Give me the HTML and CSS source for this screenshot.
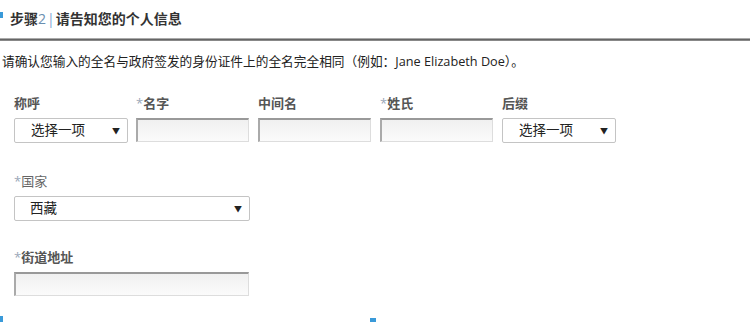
FILE: index.html
```html
<!DOCTYPE html>
<html lang="zh-CN">
<head>
    <meta charset="UTF-8">
    <title>个人信息</title>
    <link rel="stylesheet" href="styles.css">
</head>
<body>
    <div class="mark mark-top"></div>
    <div class="step-title">步骤<span class="num">2</span><span class="bar">|</span>请告知您的个人信息</div>
    <div class="rule"></div>
    <p class="note">请确认您输入的全名与政府签发的身份证件上的全名完全相同（例如：Jane Elizabeth Doe）。</p>

    <div class="form">
        <div class="row row-name">
            <div class="field w-sel">
                <label>称呼</label>
                <div class="select">选择一项<span class="arrow">▼</span></div>
            </div>
            <div class="field w-in">
                <label><span class="req">*</span>名字</label>
                <div class="input"></div>
            </div>
            <div class="field w-in">
                <label>中间名</label>
                <div class="input"></div>
            </div>
            <div class="field w-in">
                <label><span class="req">*</span>姓氏</label>
                <div class="input"></div>
            </div>
            <div class="field w-sel">
                <label>后缀</label>
                <div class="select">选择一项<span class="arrow">▼</span></div>
            </div>
        </div>

        <div class="row row-country">
            <div class="field w-wide">
                <label class="light"><span class="req">*</span>国家</label>
                <div class="select">西藏<span class="arrow">▼</span></div>
            </div>
        </div>

        <div class="row">
            <div class="field w-wide">
                <label><span class="req">*</span>街道地址</label>
                <div class="input"></div>
            </div>
        </div>
    </div>

    <div class="bottom">
        <div class="mark"></div>
        <div class="mark mark-mid"></div>
    </div>
</body>
</html>
```

FILE: styles.css
```css
body {
    margin: 0;
    font-family: "Open Sans", "Noto Sans CJK SC", sans-serif;
    font-size: 12px;
    color: #333;
    background: #fff;
    width: 750px;
    height: 322px;
    overflow: hidden;
    position: relative;
}
.mark {
    width: 3px;
    height: 6px;
    background: #3a9ad9;
}
.mark-top {
    position: absolute;
    left: 0;
    top: 12px;
}
.step-title {
    padding: 9px 0 0 10px;
    height: 19px;
    line-height: 19px;
    font-size: 14px;
    font-weight: bold;
    color: #333;
}
.step-title .num {
    color: #6a8fb0;
    font-weight: normal;
}
.step-title .bar {
    color: #7aa7d6;
    font-weight: normal;
    margin: 0 1px;
}
.rule {
    margin-top: 10px;
    height: 1px;
    border-top: 1px solid #aaa;
    border-bottom: 1px solid #888;
    background: #666;
}
.note {
    margin: 12px 0 0 2px;
    line-height: 16px;
    font-size: 12.7px;
    color: #222;
}
.form {
    padding: 26px 0 0 14px;
}
.row {
    display: flex;
    gap: 8px;
    margin-bottom: 28px;
}
.row-name {
    margin-bottom: 30px;
}
.row-country {
    margin-bottom: 28px;
}
.field label {
    display: block;
    height: 16px;
    line-height: 16px;
    font-size: 13px;
    font-weight: bold;
    color: #555;
    margin-bottom: 7px;
}
.field label.light {
    font-weight: normal;
    color: #666;
}
.req {
    color: #9aa7b8;
    font-weight: normal;
}
.w-sel { width: 114px; }
.w-in { width: 114px; }
.w-wide { width: 236px; }
.select {
    position: relative;
    height: 23px;
    line-height: 23px;
    border: 1px solid #c4c4c4;
    border-radius: 2px;
    background: #fff;
    padding-left: 16px;
    font-size: 13.5px;
    color: #222;
}
.row-country .select {
    padding-left: 15px;
}
.select .arrow {
    position: absolute;
    right: 7px;
    top: 0;
    font-size: 8px;
    color: #222;
}
.input {
    height: 21px;
    border: 1px solid #ddd;
    border-top: 2px solid #999;
    border-left: 2px solid #aaa;
    background: linear-gradient(#f0f0f0, #fbfbfb);
    width: calc(100% - 4px);
}
.bottom {
    position: absolute;
    left: 0;
    top: 316px;
    width: 400px;
    display: flex;
    justify-content: space-between;
}
.mark-mid {
    margin-right: 24px;
    height: 4px;
    width: 6px;
    margin-top: 2px;
}
```
